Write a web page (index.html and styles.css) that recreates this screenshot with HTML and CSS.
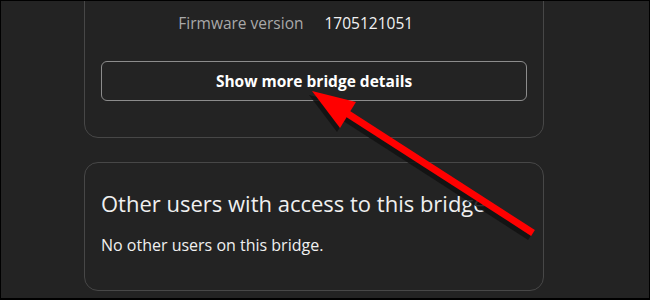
FILE: index.html
```html
<!DOCTYPE html>
<html>
<head>
<meta charset="utf-8">
<link rel="stylesheet" href="styles.css">
</head>
<body>
<div class="frame">
  <section class="card card-top">
    <div class="info-row">
      <span class="label">Firmware version</span>
      <span class="value">1705121051</span>
    </div>
    <button class="more-btn">Show more bridge details</button>
  </section>
  <section class="card card-users">
    <h2 class="title">Other users with access to this bridge</h2>
    <p class="body-text">No other users on this bridge.</p>
  </section>
  <svg class="arrow" width="650" height="300" viewBox="0 0 650 300">
    <g transform="translate(-3,4)" fill="#111" stroke="#111" opacity="0.85">
      <line x1="533" y1="233" x2="345" y2="112" stroke-width="7"/>
      <polygon points="312,91 356,102 340,128" stroke="none"/>
    </g>
    <g fill="#ff0000" stroke="#ff0000">
      <line x1="533" y1="233" x2="345" y2="112" stroke-width="7"/>
      <polygon points="312,91 356,102 340,128" stroke="none"/>
    </g>
  </svg>
</div>
</body>
</html>
```

FILE: styles.css
```css
* { box-sizing: border-box; }
html, body { margin: 0; padding: 0; }
body { background: #000; font-family: "Open Sans", "Noto Sans", sans-serif; }
.frame {
  position: relative;
  width: 650px;
  height: 300px;
  overflow: hidden;
  background: #232323;
  border-top: 1px solid #000;
  border-left: 1px solid #000;
  border-right: 1px solid #000;
  border-bottom: 2px solid #000;
  padding-left: 83px;
}
.card {
  width: 460px;
  border: 1px solid #474747;
  border-radius: 14px;
}
.card-top {
  margin-top: -40px;
  padding: 0 16px 36px;
  border-top-left-radius: 0;
}
.info-row {
  display: grid;
  grid-template-columns: 1fr 1fr;
  column-gap: 21px;
  padding-top: 50px;
  height: 99px;
  font-size: 15.5px;
  line-height: 22px;
}
.label { text-align: right; color: #a9a9a9; }
.value { color: #f2f2f2; }
.more-btn {
  display: block;
  width: 100%;
  height: 40px;
  background: transparent;
  border: 1px solid #8c8c8c;
  border-radius: 6px;
  color: #fff;
  font-family: "Open Sans", "Noto Sans", sans-serif;
  font-weight: 700;
  font-size: 15.5px;
}
.card-users {
  margin-top: 24px;
  height: 129px;
  padding: 25px 16px 0;
}
.title {
  margin: 0;
  font-weight: 400;
  font-size: 22px;
  line-height: 30px;
  color: #f0f0f0;
}
.body-text {
  margin: 16px 0 0;
  font-size: 16px;
  line-height: 22px;
  color: #f0f0f0;
}
.arrow {
  position: absolute;
  left: -1px;
  top: -1px;
}
```
